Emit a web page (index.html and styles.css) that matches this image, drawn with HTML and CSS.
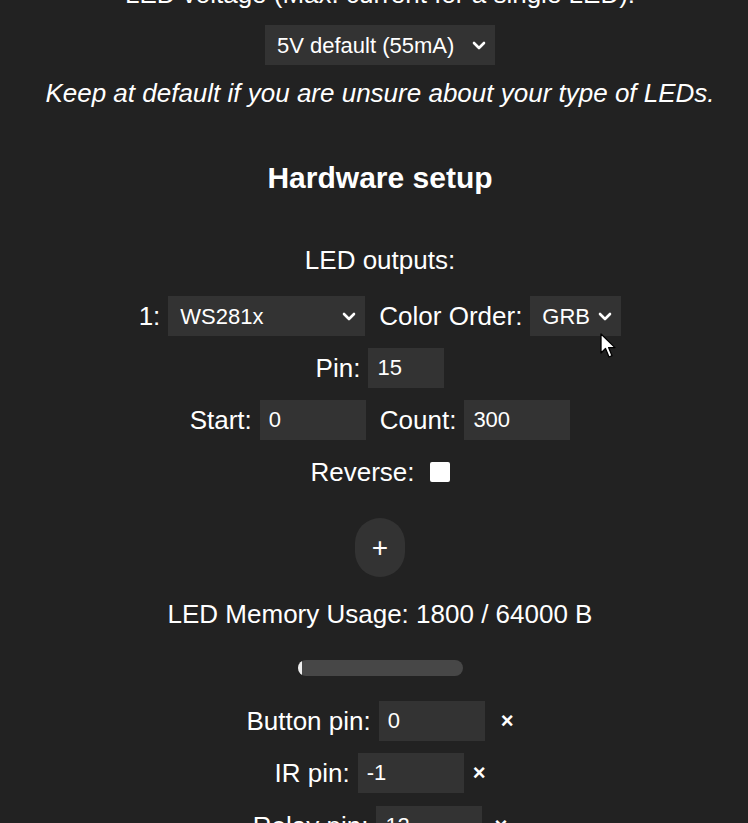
FILE: index.html
```html
<!DOCTYPE html>
<html lang="en">
<head>
<meta charset="utf-8">
<title>LED Settings</title>
<link rel="stylesheet" href="styles.css">
</head>
<body>
<main class="page">
  <p class="line top-line">LED voltage (Max. current for a single LED):</p>
  <div class="row row-volt">
    <span class="select sel-volt">
      <select><option>5V default (55mA)</option></select>
      <svg class="chev" viewBox="0 0 14 9" width="14" height="9"><path d="M2 2 L7 7 L12 2" fill="none" stroke="#fff" stroke-width="2.6" stroke-linecap="round" stroke-linejoin="round"/></svg>
    </span>
  </div>
  <p class="line note"><i>Keep at default if you are unsure about your type of LEDs.</i></p>

  <h3 class="title">Hardware setup</h3>
  <p class="line outputs">LED outputs:</p>

  <div class="row row-first">
    <span class="lbl">1:</span>
    <span class="select sel-type">
      <select><option>WS281x</option></select>
      <svg class="chev" viewBox="0 0 14 9" width="14" height="9"><path d="M2 2 L7 7 L12 2" fill="none" stroke="#fff" stroke-width="2.6" stroke-linecap="round" stroke-linejoin="round"/></svg>
    </span>
    <span class="lbl lbl-after">Color Order:</span>
    <span class="select sel-order">
      <select><option>GRB</option></select>
      <svg class="chev" viewBox="0 0 14 9" width="14" height="9"><path d="M2 2 L7 7 L12 2" fill="none" stroke="#fff" stroke-width="2.6" stroke-linecap="round" stroke-linejoin="round"/></svg>
    </span>
  </div>
  <div class="row">
    <span class="lbl">Pin:</span>
    <input class="inp inp-pin" type="text" value="15">
  </div>
  <div class="row">
    <span class="lbl">Start:</span>
    <input class="inp inp-wide" type="text" value="0">
    <span class="lbl lbl-after">Count:</span>
    <input class="inp inp-wide" type="text" value="300">
  </div>
  <div class="row">
    <span class="lbl">Reverse:</span>
    <input class="chk" type="checkbox">
  </div>

  <div class="row row-add">
    <button class="add" type="button">+</button>
  </div>

  <p class="line mem">LED Memory Usage: 1800 / 64000 B</p>
  <div class="row row-bar">
    <div class="bar"><div class="bar-fill" style="width:2.8125%"></div></div>
  </div>

  <div class="row row-btn">
    <span class="lbl">Button pin:</span>
    <input class="inp inp-wide" type="text" value="0">
    <span class="x x-btn">×</span>
  </div>
  <div class="row">
    <span class="lbl">IR pin:</span>
    <input class="inp inp-wide" type="text" value="-1">
    <span class="x x-ir">×</span>
  </div>
  <div class="row row-relay">
    <span class="lbl">Relay pin:</span>
    <input class="inp inp-wide" type="text" value="12">
    <span class="x x-relay">×</span>
  </div>
</main>

<svg class="cursor" width="18" height="27" viewBox="0 0 18 27">
  <path d="M1 1 L1 20 L5.5 15.5 L9 24 L12 22.7 L8.6 14.6 L15 14.6 Z" fill="#fff" stroke="#000" stroke-width="1.3" stroke-linejoin="round"/>
</svg>
</body>
</html>
```
FILE: styles.css
```css
html, body {
  margin: 0;
  padding: 0;
  background: #222;
  overflow: hidden;
}
body {
  width: 748px;
  height: 823px;
  position: relative;
  color: #fff;
  font-family: "Liberation Sans", Arial, sans-serif;
  font-size: 26px;
}
.page {
  padding-left: 12px;
  display: flex;
  flex-direction: column;
  align-items: center;
  margin-top: -21px;
}
.line {
  margin: 0;
  line-height: 30px;
  height: 30px;
  white-space: nowrap;
  text-align: center;
}
.row {
  display: flex;
  align-items: center;
  justify-content: center;
  height: 40px;
  margin-top: 12px;
  white-space: nowrap;
}
.row-volt { margin-top: 16px; }
.note { margin-top: 13px; }
.title {
  margin: 53px 0 0;
  font-size: 30px;
  line-height: 34px;
  font-weight: bold;
}
.outputs { margin-top: 50px; }
.row-first { margin-top: 21px; }
.row-add { margin-top: 26px; height: 59px; }
.mem { margin-top: 22px; }
.row-bar { margin-top: 31px; height: 16px; }
.row-btn { margin-top: 25px; }
.row-relay { margin-top: 13px; }

.lbl { margin-right: 8px; }
.lbl-after { margin-left: 14px; }

.select {
  position: relative;
  display: inline-flex;
  height: 40px;
}
.select select {
  appearance: none;
  -webkit-appearance: none;
  width: 100%;
  height: 40px;
  border: 0;
  border-radius: 0;
  outline: none;
  background: #333;
  color: #fff;
  font-family: "Liberation Sans", Arial, sans-serif;
  font-size: 22px;
  padding: 0 12px;
}
.chev {
  position: absolute;
  right: 9px;
  top: 16px;
  pointer-events: none;
}
.sel-volt { width: 230px; }
.sel-type { width: 197px; }
.sel-order { width: 91px; }
.sel-order select { padding-left: 12px; }

.inp {
  height: 40px;
  box-sizing: border-box;
  border: 0;
  border-radius: 0;
  outline: none;
  background: #333;
  color: #fff;
  font-family: "Liberation Sans", Arial, sans-serif;
  font-size: 22px;
  padding: 0 9px;
}
.inp-pin { width: 76px; }
.inp-wide { width: 106px; }

.chk {
  appearance: none;
  -webkit-appearance: none;
  width: 20px;
  height: 20px;
  margin: 0 0 0 7px;
  background: #fff;
  border-radius: 2px;
}

.add {
  width: 50px;
  height: 59px;
  border: 0;
  border-radius: 25px;
  background: #333;
  color: #fff;
  font-family: "Liberation Sans", Arial, sans-serif;
  font-size: 28px;
  padding: 0;
}

.bar {
  width: 165px;
  height: 16px;
  border-radius: 8px;
  background: #474747;
  overflow: hidden;
}
.bar-fill {
  height: 100%;
  background: #eee;
  border-radius: 8px 0 0 8px;
}

.x {
  font-size: 22px;
  font-weight: bold;
}
.x-btn { margin-left: 16px; }
.x-ir { margin-left: 9px; }
.x-relay { margin-left: 12px; }

.cursor {
  position: absolute;
  left: 600px;
  top: 333px;
}
```
